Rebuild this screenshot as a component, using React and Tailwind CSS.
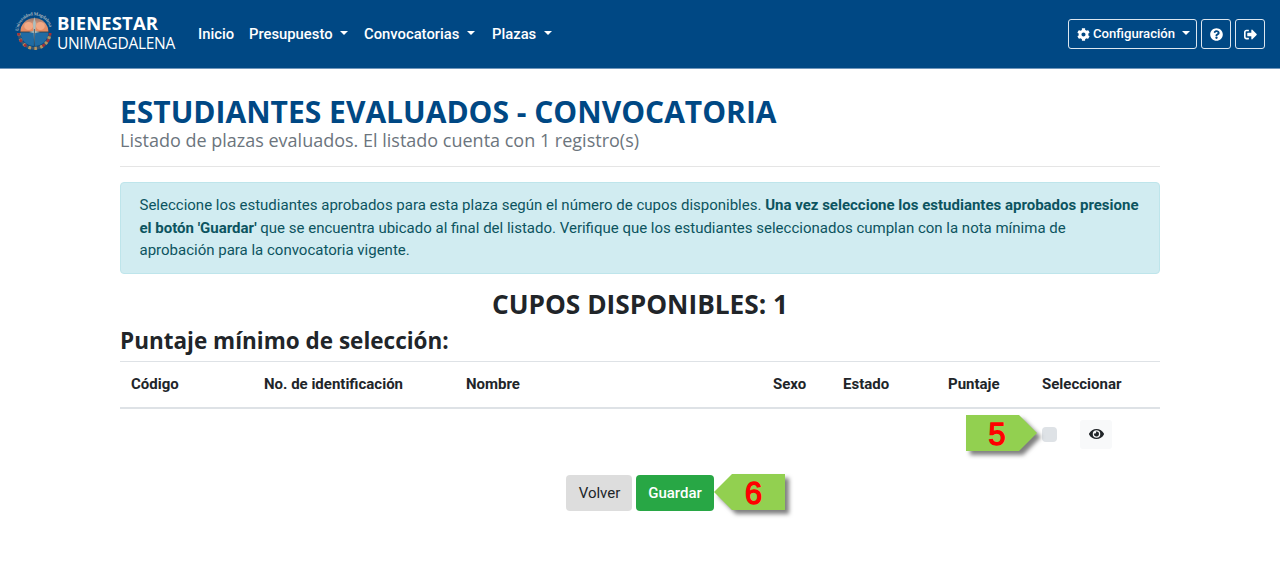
import { FaCog, FaQuestionCircle, FaSignOutAlt, FaEye } from "react-icons/fa";

const columns = ["Código", "No. de identificación", "Nombre", "Sexo", "Estado", "Puntaje", "Seleccionar"];

function Caret({ className }) {
  return (
    <span
      className={`inline-block h-0 w-0 border-x-[4px] border-t-[4px] border-x-transparent border-t-white ${className}`}
    />
  );
}

function Crest() {
  return (
    <svg viewBox="0 0 40 40" className="h-[40px] w-[40px] shrink-0">
      <defs>
        <path id="motto" d="M4.6 20 A15.6 15.6 0 0 1 35.8 20" />
        <linearGradient id="sky" x1="0" y1="0" x2="0" y2="1">
          <stop offset="0" stopColor="#8f7770" />
          <stop offset="0.4" stopColor="#dc9474" />
          <stop offset="1" stopColor="#e8895c" />
        </linearGradient>
      </defs>
      <text fontFamily="Liberation Serif, serif" fontSize="4.8" fontWeight="bold" fill="#a9b6bd">
        <textPath href="#motto" textLength="45">Universidad Magdalena</textPath>
      </text>
      <path d="M6.4 21 A14 14 0 0 1 34.4 21 Z" fill="url(#sky)" />
      <path d="M6.4 21 A14 14 0 0 0 34.4 21 Z" fill="#1f6ba3" />
      <path d="M5 22 A15.4 15.4 0 0 0 35.8 22" fill="none" stroke="#3a5570" strokeWidth="2.6" />
      <path d="M5 22 A15.4 15.4 0 0 0 35.8 22" fill="none" stroke="#b3945e" strokeWidth="3.2" strokeDasharray="2.6 3.4" />
      <path d="M4.6 22 A15.8 15.8 0 0 0 14 36" fill="none" stroke="#a52f36" strokeWidth="2.6" strokeDasharray="2.6 4" />
      <path d="M36.2 22 A15.8 15.8 0 0 1 26.8 36" fill="none" stroke="#a52f36" strokeWidth="2.6" strokeDasharray="2.6 4" />
      <ellipse cx="14.6" cy="15" rx="4.4" ry="4" fill="#f2a985" />
      <ellipse cx="26.4" cy="15" rx="4.4" ry="4" fill="#f2a985" />
      <path d="M6 21 H35" stroke="#2f3d48" strokeWidth="0.9" />
      <path d="M20.4 6 L21.8 12 L21.4 20 L26 21 L21.2 21.9 L20.4 35 L19.6 21.9 L15 21 L19.4 20 L19 12 Z" fill="#a9bfc0" />
      <path d="M20.4 18 V35" stroke="#26394a" strokeWidth="0.7" />
    </svg>
  );
}

function NavItem({ label, menu, className }) {
  return (
    <a className={`flex items-center whitespace-nowrap ${className}`}>
      {label}
      {menu && <Caret className="-mt-[3px] ml-[7.5px]" />}
    </a>
  );
}

function Navbar() {
  return (
    <header className="flex h-[69px] items-start border-b border-[#7096bb] bg-[#004884] pl-[14px] pr-[15px] text-white">
      <div className="mt-[11px] flex">
        <Crest />
        <div className="ml-[3px] w-[126px] font-['Open_Sans',sans-serif]">
          <div className="mt-px text-[18.5px] font-bold leading-[22px] tracking-[0.1px]">BIENESTAR</div>
          <div className="-mt-px text-[15.5px] leading-[20px] tracking-[-0.3px]">UNIMAGDALENA</div>
        </div>
      </div>
      <nav className="ml-[15px] mt-[23px] flex h-[22px] text-[14.8px] font-medium">
        <NavItem label="Inicio" className="w-[51px]" />
        <NavItem label="Presupuesto" menu className="w-[115px]" />
        <NavItem label="Convocatorias" menu className="w-[128px]" />
        <NavItem label="Plazas" menu className="w-[62px]" />
      </nav>
      <div className="ml-auto mt-[19px] flex gap-[4px] text-[13.125px] font-medium">
        <button className="flex h-[30px] w-[129px] items-center rounded-[3px] border border-[#dce6ef] pl-[8px]">
          <FaCog className="h-[13px] w-[13px]" />
          <span className="ml-[3px] whitespace-nowrap">Configuración</span>
          <Caret className="-mt-[3px] ml-[6.5px]" />
        </button>
        <button className="flex h-[30px] w-[30px] items-center justify-center rounded-[3px] border border-[#dce6ef]">
          <FaQuestionCircle className="h-[13px] w-[13px]" />
        </button>
        <button className="flex h-[30px] w-[30px] items-center justify-center rounded-[3px] border border-[#dce6ef]">
          <FaSignOutAlt className="h-[13px] w-[13px]" />
        </button>
      </div>
    </header>
  );
}

function Callout({ number, left, className }) {
  return (
    <div className={`absolute h-[37px] w-[74px] ${className}`}>
      <svg viewBox="0 0 74 37" className="absolute inset-0 h-full w-full overflow-visible drop-shadow-[4px_4px_2px_rgba(0,0,0,0.5)]">
        <path d={left ? "M0 18 L18 0 H71 V36 H18 Z" : "M0 0 H53 L71 18 L53 36 H0 Z"} fill="#92d050" />
      </svg>
      <span
        className={`absolute top-px font-['Liberation_Sans',sans-serif] text-[30.5px] leading-[37px] text-[#ff0000] [-webkit-text-stroke:1.4px_#ff0000] ${left ? "left-[31px]" : "left-[22.5px]"}`}
      >
        {number}
      </span>
    </div>
  );
}

export default function App() {
  return (
    <div className="h-[586px] w-[1280px] overflow-hidden bg-white font-[Roboto,sans-serif] text-[#212529]">
      <Navbar />
      <main className="mx-auto w-[1040px]">
        <div className="h-[98px] border-b border-[#e5e5e5] pt-[26px] font-['Open_Sans',sans-serif]">
          <h1 className="whitespace-nowrap text-[30px] font-bold leading-[34px] text-[#004884]">
            ESTUDIANTES EVALUADOS - CONVOCATORIA
          </h1>
          <p className="-mt-px whitespace-nowrap text-[18px] leading-[24px] text-[#6c757d]">
            Listado de plazas evaluados. El listado cuenta con 1 registro(s)
          </p>
        </div>
        <div className="mt-[15px] h-[92px] whitespace-nowrap rounded-[4px] border border-[#bee5eb] bg-[#d1ecf1] pl-[18.5px] pt-[11px] text-[15px] leading-[22.5px] text-[#0c5460]">
          <p>
            Seleccione los estudiantes aprobados para esta plaza según el número de cupos disponibles.{" "}
            <b>Una vez seleccione los estudiantes aprobados presione</b>
          </p>
          <p>
            <b>el botón 'Guardar'</b> que se encuentra ubicado al final del listado. Verifique que los estudiantes
            seleccionados cumplan con la nota mínima de
          </p>
          <p>aprobación para la convocatoria vigente.</p>
        </div>
        <h2 className="mt-[13px] text-center font-['Open_Sans',sans-serif] text-[26.25px] font-bold leading-[34px]">
          CUPOS DISPONIBLES: 1
        </h2>
        <h3 className="mt-[5px] font-['Open_Sans',sans-serif] text-[22.5px] font-bold leading-[30px]">
          Puntaje mínimo de selección:
        </h3>
        <div className="mt-[5px] grid h-[48px] grid-cols-[133px_202px_307px_70px_105px_94px_129px] items-center border-b-2 border-t border-[#dee2e6] text-[15px] font-bold">
          {columns.map((c) => (
            <div key={c} className="whitespace-nowrap pl-[11px]">
              {c}
            </div>
          ))}
        </div>
        <div className="relative flex h-[66px] pl-[922px] pt-[11px]">
          <span className="mt-[7px] h-[15px] w-[15px] rounded-[4px] bg-[#dee2e6]" />
          <button className="ml-[23px] flex h-[29px] w-[32px] items-center justify-center rounded-[3px] bg-[#f8f9fa] pb-px">
            <FaEye className="h-[14px] w-[15px]" />
          </button>
          <Callout number="5" className="left-[846px] top-[6px]" />
        </div>
        <div className="relative flex gap-[4px] pl-[446px] text-[15px]">
          <button className="h-[36px] w-[66px] rounded-[4px] bg-[#dddddd] pl-px">Volver</button>
          <button className="h-[36px] w-[78px] rounded-[4px] bg-[#28a745] font-medium text-white">Guardar</button>
          <Callout number="6" left className="left-[594px] top-[-1px]" />
        </div>
      </main>
    </div>
  );
}
